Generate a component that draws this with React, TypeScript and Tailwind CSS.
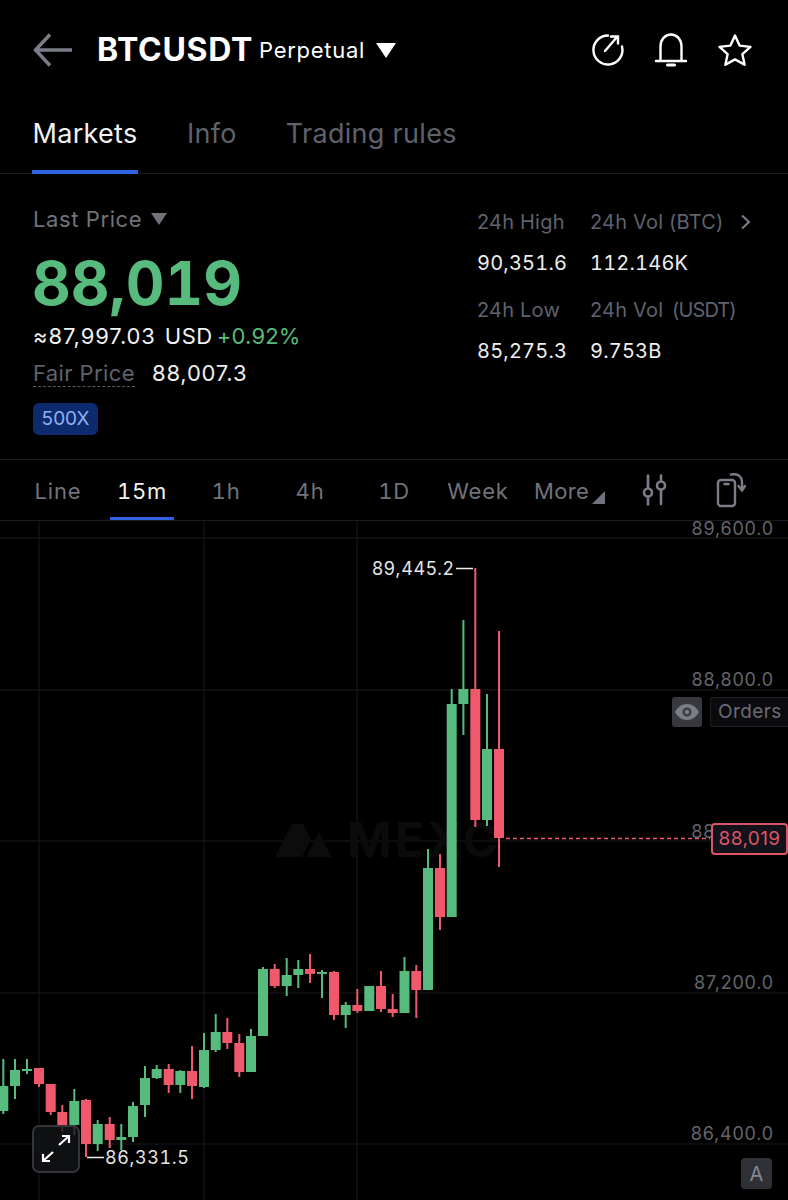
import React from 'react';

// [x, bodyTop, bodyBottom, wickTop, wickBottom, isGreen]
type Candle = [number, number, number, number, number, boolean];

const candles: Candle[] = [
  [3.3, 1086, 1111, 1059, 1114, true],
  [15, 1070, 1086, 1059, 1099, true],
  [27, 1069, 1071, 1059, 1074, true],
  [39, 1068, 1084, 1068, 1087, false],
  [50.7, 1084, 1112, 1084, 1115, false],
  [62.3, 1112, 1125, 1105, 1132, false],
  [74.3, 1101, 1125, 1089, 1135, true],
  [86, 1100, 1144, 1099, 1157, false],
  [97.7, 1124, 1144, 1120, 1151, true],
  [109.7, 1124, 1140, 1117, 1148, false],
  [121.3, 1137, 1140, 1124, 1150, true],
  [133, 1106, 1137, 1102, 1142, true],
  [145, 1078, 1105, 1066, 1117, true],
  [156.7, 1069, 1078, 1065, 1079, true],
  [168.7, 1069, 1085, 1064, 1093, false],
  [180.3, 1071, 1085, 1070, 1093, true],
  [192, 1071, 1086, 1046, 1099, false],
  [204, 1050, 1087, 1033, 1088, true],
  [215.7, 1032, 1050, 1014, 1052, true],
  [227.3, 1032, 1043, 1018, 1049, false],
  [239.3, 1043, 1072, 1034, 1077, false],
  [251, 1036, 1072, 1029, 1072, true],
  [263, 969, 1036, 967, 1036, true],
  [274.7, 969, 986, 964, 988, false],
  [286.7, 975, 986, 958, 996, true],
  [298.3, 969, 975, 960, 988, true],
  [310, 969, 974, 954, 983, false],
  [322, 972, 974, 970, 998, true],
  [334, 972, 1015, 971, 1020, false],
  [345.7, 1005, 1015, 1002, 1028, true],
  [357.3, 1005, 1011, 989, 1013, false],
  [369.3, 986, 1011, 986, 1011, true],
  [381, 986, 1009, 971, 1012, false],
  [392.7, 1009, 1013, 994, 1017, false],
  [404.5, 971, 1013, 957, 1013, true],
  [416.3, 971, 990, 965, 1018, false],
  [428, 868, 990, 849, 990, true],
  [440, 868, 917, 854, 930, false],
  [451.7, 704, 917, 689, 917, true],
  [463.4, 689, 704, 620, 735, true],
  [475.3, 689, 820, 568, 827, false],
  [487, 749, 820, 694, 826, true],
  [499, 749, 838, 631, 867, false],
];

const gridRows = [538, 690, 841, 993, 1144];
const gridCols = [39, 204, 357];
const axisLabels = [
  { y: 528, text: '89,600.0' },
  { y: 679, text: '88,800.0' },
  { y: 831, text: '88,000.0' },
  { y: 982, text: '87,200.0' },
  { y: 1133, text: '86,400.0' },
];

const intervals = ['Line', '15m', '1h', '4h', '1D', 'Week'];

const BackArrow = () => (
  <svg width="40" height="34" viewBox="0 0 40 34" fill="none" stroke="#7b7e88" strokeWidth="3.4">
    <path d="M17 1.5 2.5 17 17 32.5M3 17h36" />
  </svg>
);

const ShareIcon = () => (
  <svg width="34" height="34" viewBox="0 0 34 34" fill="none" stroke="#fff" strokeWidth="2.4" strokeLinecap="round">
    <path d="M17 2.5a14.5 14.5 0 1 0 14 11" />
    <path d="M14 18 26 4M20 3.5h7v7" />
  </svg>
);

const BellIcon = () => (
  <svg width="34" height="36" viewBox="0 0 34 36" fill="none" stroke="#fff" strokeWidth="2.4" strokeLinecap="round">
    <path d="M6.5 28V14a10.5 11.5 0 0 1 21 0v14M2 29h30" />
    <path d="M13.5 33h7" strokeWidth="3" />
  </svg>
);

const StarIcon = () => (
  <svg width="36" height="34" viewBox="0 0 36 34" fill="none" stroke="#fff" strokeWidth="2.4" strokeLinejoin="round">
    <path d="M18 2.5 22.6 12.6 33.5 13.9 25.4 21.2 27.6 31.8 18 26.4 8.4 31.8 10.6 21.2 2.5 13.9 13.4 12.6Z" />
  </svg>
);

const SlidersIcon = () => (
  <svg width="26" height="32" viewBox="0 0 26 32" fill="none" stroke="#7b7e88" strokeWidth="2.6" strokeLinecap="round">
    <path d="M6 1.5v12M6 24v6.500M19 1.500v5M19 17v13" />
    <circle cx="6" cy="18.500" r="4" />
    <circle cx="19" cy="11.500" r="4" />
  </svg>
);

const RotateIcon = () => (
  <svg width="30" height="36" viewBox="0 0 30 36" fill="none" stroke="#7b7e88" strokeWidth="2.4" strokeLinecap="round" strokeLinejoin="round">
    <rect x="2" y="8" width="17" height="26" rx="3" />
    <path d="M8.500 12h4" />
    <path d="M15 2.500c6-1 11 1 11 8v7M22.500 14l3.500 4.500 3-4.500" />
  </svg>
);

const ExpandIcon = () => (
  <svg width="30" height="30" viewBox="0 0 30 30" fill="none" stroke="#fff" strokeWidth="2.2">
    <path d="M18 11 28 2M21 2h7v7" />
    <path d="M12 18 2 27M2 20v7h7" />
  </svg>
);

const EyeIcon = () => (
  <svg width="24" height="16" viewBox="0 0 24 16">
    <path fillRule="evenodd" fill="#7b7d85" d="M12 0c5.500 0 9.500 3.500 12 8-2.500 4.500-6.500 8-12 8S2.500 12.500 0 8c2.500-4.500 6.500-8 12-8Zm0 3.500a4.500 4.500 0 1 0 0 9 4.500 4.500 0 0 0 0-9Zm0 2.200a2.300 2.300 0 1 1 0 4.600 2.300 2.300 0 0 1 0-4.600Z" />
  </svg>
);

const Caret = ({ color, size }: { color: string; size: number }) => (
  <svg width={size} height={size * 0.75} viewBox="0 0 16 12">
    <path d="M0 0h16L8 12Z" fill={color} />
  </svg>
);

const Stat = ({ label, value, width }: { label: React.ReactNode; value: string; width: string }) => (
  <div className={`${width} shrink-0`}>
    <div className="text-[20px] leading-[24px] tracking-[0.2px] text-[#5f626d] whitespace-pre">{label}</div>
    <div className="mt-[17px] text-[20px] leading-[24px] tracking-[0.2px] tabular-nums text-[#eeeeee]">{value}</div>
  </div>
);

const Chart = () => (
  <div className="relative flex-1">
    <svg className="absolute inset-0" width="788" height="679" viewBox="0 521 788 679">
      {gridRows.map((y) => (
        <line key={y} x1="0" x2="788" y1={y} y2={y} stroke="#1b1b1e" strokeWidth="1" />
      ))}
      {gridCols.map((x) => (
        <line key={x} x1={x} x2={x} y1="521" y2="1200" stroke="#1b1b1e" strokeWidth="1" />
      ))}

      {/* MEXC watermark mark */}
      <path d="M275 857 292 824h11l8 16-9 17Zm31 0 13-25 13 25Z" fill="#0c0c0d" />
      <text x="347" y="857" fontSize="48" fontWeight="700" letterSpacing="3" fill="#0b0b0c" fontFamily="Inter, sans-serif">
        MEXC
      </text>

      {candles.map(([x, top, bottom, wickTop, wickBottom, isGreen]) => {
        const color = isGreen ? '#58bb7e' : '#ef596b';
        return (
          <g key={x} fill={color}>
            <rect x={x - 1} y={wickTop} width="2" height={wickBottom - wickTop} />
            <rect x={x - 5} y={top} width="10" height={bottom - top} />
          </g>
        );
      })}

      <line x1="506" x2="710" y1="838.500" y2="838.500" stroke="#ef596b" strokeWidth="1.500" strokeDasharray="4 3" />
      <line x1="456" x2="473" y1="568.500" y2="568.500" stroke="#eeeeee" strokeWidth="1.500" />
      <line x1="87" x2="104" y1="1157.500" y2="1157.500" stroke="#eeeeee" strokeWidth="1.500" />
    </svg>

    {axisLabels.map((label) => (
      <div
        key={label.text}
        className="absolute right-[14px] text-[18px] leading-[22px] tracking-[0.8px] text-[#63656d]"
        style={{ top: label.y - 521 - 10 }}
      >
        {label.text}
      </div>
    ))}

    <div className="absolute left-[372px] top-[37px] text-[18px] leading-[22px] tracking-[0.7px] text-[#e6e6e6]">89,445.2</div>
    <div className="absolute left-[105px] top-[626px] text-[18px] leading-[22px] tracking-[0.6px] tabular-nums text-[#e6e6e6]">86,331.5</div>

    <div className="absolute left-[672px] top-[176px] flex h-[30px] w-[30px] items-center justify-center rounded-[3px] bg-[#38393e]">
      <EyeIcon />
    </div>
    <div className="absolute left-[710px] top-[176px] flex h-[30px] w-[78px] items-center rounded-l-[3px] border border-r-0 border-[#1d1e21] bg-[#0b0b0d] pl-[7px] text-[19px] tracking-[0.4px] text-[#6a6c74]">
      Orders
    </div>
    <div className="absolute left-[711px] top-[302px] flex h-[32px] w-[77px] items-center justify-center rounded-[4px] border-2 border-[#dc5566] bg-[#12121a] text-[19px] tracking-[0.4px] text-[#dc5566]">
      88,019
    </div>
    <div className="absolute left-[32px] top-[604px] flex h-[48px] w-[48px] items-center justify-center rounded-[7px] border-2 border-[#33353a] bg-[#131417]/80">
      <ExpandIcon />
    </div>
    <div className="absolute left-[741px] top-[637px] flex h-[31px] w-[31px] items-center justify-center rounded-[4px] bg-[#303136] text-[20px] text-[#85878e]">
      A
    </div>
  </div>
);

export default function App() {
  return (
    <div className="flex h-[1200px] w-[788px] flex-col overflow-hidden bg-black [font-family:Inter,sans-serif] text-white">
      {/* Header */}
      <div className="flex h-[100px] shrink-0 items-center pl-[33px] pr-[35px]">
        <BackArrow />
        <span className="ml-[24px] text-[32px] font-bold leading-none tracking-[0.7px]">BTCUSDT</span>
        <span className="ml-[6px] text-[22px] leading-none tracking-[0.7px]">Perpetual</span>
        <span className="ml-[11px]">
          <Caret color="#ffffff" size={20} />
        </span>
        <div className="ml-auto flex items-center gap-[29px]">
          <ShareIcon />
          <BellIcon />
          <StarIcon />
        </div>
      </div>

      {/* Page tabs */}
      <div className="flex h-[74px] shrink-0 gap-[49px] border-b border-[#1b1b1e] pl-[32px] text-[27px] leading-[34px] tracking-[0.3px]">
        <div className="relative flex w-[106px] items-start justify-center pt-[17px] text-[#f2f2f2]">
          Markets
          <div className="absolute -bottom-px left-0 h-[4px] w-[106px] bg-[#2f62e3]" />
        </div>
        <div className="pt-[17px] text-[#5f626d]">Info</div>
        <div className="pt-[17px] text-[#5f626d]">Trading rules</div>
      </div>

      {/* Price summary */}
      <div className="flex h-[286px] shrink-0 border-b border-[#1b1b1e] pl-[33px]">
        <div className="flex w-[444px] shrink-0 flex-col">
          <div className="mt-[32px] flex items-center gap-[9px] text-[22px] leading-[26px] tracking-[0.6px] text-[#71737c]">
            Last Price
            <Caret color="#71737c" size={16} />
          </div>
          <div className="mt-[15px] -ml-px text-[60px] font-bold leading-[72px] tabular-nums text-[#58bb7e]">88,019</div>
          <div className="mt-[3px] flex text-[22px] leading-[28px] tracking-[0.9px] text-[#f2f2f2]">
            ≈87,997.03<span className="ml-[9px] tracking-[0.5px]">USD</span>
            <span className="ml-[4px] tracking-[0.2px] text-[#58bb7e]">+0.92%</span>
          </div>
          <div className="mt-[10px] flex text-[22px] leading-[26px] tracking-[0.4px]">
            <span className="border-b border-dashed border-[#5a5c64] text-[#5f626d]">Fair Price</span>
            <span className="ml-[17px] tracking-[0.8px] text-[#eeeeee]">88,007.3</span>
          </div>
          <div className="mt-[16px] flex h-[32px] w-[65px] items-center justify-center rounded-[6px] bg-[#0e2a6e] text-[19px] text-[#8db0f5]">
            500X
          </div>
        </div>
        <div className="flex flex-col pt-[36px]">
          <div className="flex">
            <Stat label="24h High" value="90,351.6" width="w-[113px]" />
            <Stat label="24h Vol (BTC)" value="112.146K" width="w-[156px]" />
            <svg className="-ml-[6px] mt-[4px]" width="12" height="16" viewBox="0 0 12 16" fill="none" stroke="#7b7e88" strokeWidth="2">
              <path d="m2 1.500 7 6.500-7 6.500" />
            </svg>
          </div>
          <div className="mt-[23px] flex">
            <Stat label="24h Low" value="85,275.3" width="w-[113px]" />
            <Stat
              label={
                <>
                  24h Vol <span className="ml-[3px] tracking-[-0.9px]">(USDT)</span>
                </>
              }
              value="9.753B"
              width="w-[160px]"
            />
          </div>
        </div>
      </div>

      {/* Interval tabs */}
      <div className="flex h-[61px] shrink-0 items-center border-b border-[#1b1b1e] pl-[16px] text-[22px] tracking-[0.8px] tabular-nums text-[#71737c]">
        {intervals.map((item) => (
          <div key={item} className="relative flex h-full w-[84px] items-center justify-center pt-[2px]">
            {item === '15m' ? <span className="text-[#f2f2f2]">{item}</span> : item}
            {item === '15m' && <div className="absolute bottom-0 left-[10px] h-[3px] w-[64px] bg-[#2f62e3]" />}
          </div>
        ))}
        <span className="ml-[14px] mt-[2px] tracking-[0.3px]">More</span>
        <svg className="ml-[3px] mt-[14px]" width="13" height="13" viewBox="0 0 13 13">
          <path d="M13 0v13H0Z" fill="#71737c" />
        </svg>
        <div className="ml-[37px]">
          <SlidersIcon />
        </div>
        <div className="ml-[48px]">
          <RotateIcon />
        </div>
      </div>

      <Chart />
    </div>
  );
}
